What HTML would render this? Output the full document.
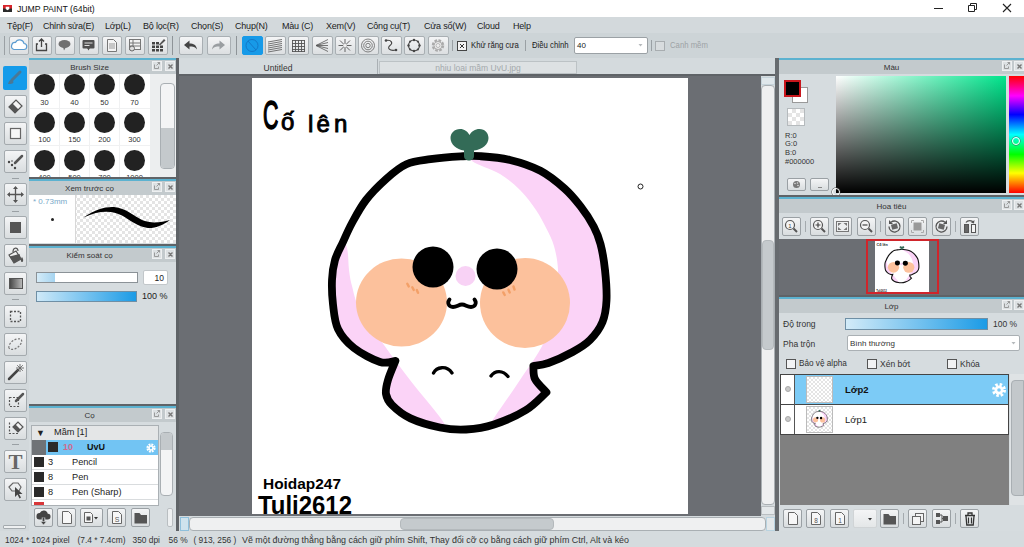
<!DOCTYPE html>
<html><head><meta charset="utf-8"><title>JUMP PAINT</title>
<style>
*{box-sizing:border-box;margin:0;padding:0}
html,body{width:1024px;height:547px;overflow:hidden;background:#d5dbde;font-family:"Liberation Sans",sans-serif;font-size:9px;color:#222}
.a{position:absolute}
.t{position:absolute;white-space:nowrap;line-height:1}
#title{left:0;top:0;width:1024px;height:17px;background:#fff}
#menu{left:0;top:17px;width:1024px;height:16px;background:#d3d9dc}
#menu .t{top:4.500px;font-size:9px;letter-spacing:-0.2px;color:#1c1c1c}
#tool{left:0;top:33px;width:1024px;height:25px;background:#cdd4d7}
.b{position:absolute;width:20px;height:19px;top:36px;background:linear-gradient(#f4f5f6,#dcdfe1);border:1px solid #a9afb3;border-radius:2px}
.b.sel{background:#179ae8;border-color:#179ae8}
.sep{position:absolute;width:1px;background:#8e9498}
.ph{position:absolute;height:14px;background:#c3cacd;text-align:center;font-size:8px;line-height:16px;color:#333}
.teal{position:absolute;height:2px;background:#5cb2d0}
.dk{position:absolute;height:2px;background:#5f6367}
.pb{position:absolute;width:10px;height:10px;border:1px solid #eef0f1;background:#dde1e3;top:1px}
.lb{position:absolute;width:23px;height:23px;left:4px;background:linear-gradient(#f4f5f6,#d9dddf);border:1px solid #a4aaae;border-radius:2px}
.sb{position:absolute;width:19px;height:19px;background:linear-gradient(#f4f5f6,#d9dddf);border:1px solid #9aa0a4;border-radius:2px}
.cb{position:absolute;width:10px;height:10px;border:1px solid #444;background:#f4f4f4}
.nx{transform:scaleX(.86);transform-origin:0 0}
.st{top:536px;font-size:8.400px;color:#333}
.chk{background-color:#fff;background-image:linear-gradient(45deg,#e4e4e4 25%,transparent 25%,transparent 75%,#e4e4e4 75%),linear-gradient(45deg,#e4e4e4 25%,transparent 25%,transparent 75%,#e4e4e4 75%);background-size:6px 6px;background-position:0 0,3px 3px}
</style></head><body>
<!-- TITLE -->
<div id="title" class="a">
<svg class="a" style="left:3px;top:5px" width="9" height="7" viewBox="0 0 10 8" preserveAspectRatio="none"><rect width="10" height="8" fill="#2a2a2a"/><rect width="10" height="4" fill="#d8232a"/><path d="M3 2h4v2.500l-2 1.500l-2-1.500z" fill="#fff"/></svg>
<span class="t" style="left:17px;top:4.500px;font-size:8.700px;color:#111">JUMP PAINT (64bit)</span>
<svg class="a" style="left:930px;top:0" width="94" height="17"><path d="M4 8.5h9" stroke="#222" stroke-width="1"/><path d="M38.5 5.5h6v6h-6z M40.500 5.500v-2h6v6h-2" fill="none" stroke="#222" stroke-width="1"/><path d="M73 4l8 8M81 4l-8 8" stroke="#222" stroke-width="1.1"/></svg>
</div>
<!-- MENU -->
<div id="menu" class="a">
<span class="t" style="left:7px">Tệp(F)</span>
<span class="t" style="left:43px">Chỉnh sửa(E)</span>
<span class="t" style="left:105px">Lớp(L)</span>
<span class="t" style="left:143px">Bộ lọc(R)</span>
<span class="t" style="left:191px">Chọn(S)</span>
<span class="t" style="left:235px">Chụp(N)</span>
<span class="t" style="left:282px">Màu (C)</span>
<span class="t" style="left:326px">Xem(V)</span>
<span class="t" style="left:367px">Công cụ(T)</span>
<span class="t" style="left:424px">Cửa sổ(W)</span>
<span class="t" style="left:477px">Cloud</span>
<span class="t" style="left:513px">Help</span>
</div>
<!-- TOOLBAR -->
<div id="tool" class="a"></div>
<!--TOOLBAR-BTNS-->
<div class="b" style="left:9px"><svg class="a" style="left:-1px;top:-1px" width="20" height="19"><path d="M5 13.500h9.500a3 3 0 0 0 .5-6a4.500 4.500 0 0 0-8.500-1a3.600 3.600 0 0 0-1.500 7z" fill="#fff" stroke="#5a9bd0" stroke-width="1.200"/></svg></div>
<div class="b" style="left:32px"><svg class="a" style="left:-1px;top:-1px" width="20" height="19"><path d="M6 8h-1.500v6.500h10v-6.500h-1.500M9.500 11v-8M7 5.500l2.500-2.500l2.500 2.500" fill="none" stroke="#444" stroke-width="1.300"/></svg></div>
<div class="b" style="left:55px"><svg class="a" style="left:-1px;top:-1px" width="20" height="19"><ellipse cx="9.500" cy="8" rx="6" ry="4" fill="#707070"/><path d="M8 11l1 3.500l2-3.500z" fill="#707070"/></svg></div>
<div class="b" style="left:79px"><svg class="a" style="left:-1px;top:-1px" width="20" height="19"><rect x="3.500" y="4" width="12" height="8.500" rx="1" fill="#505050"/><path d="M8 12l1.500 2.500l1.500-2.500z" fill="#505050"/><path d="M5.500 7h8M5.500 9.500h5" stroke="#ddd" stroke-width="1"/></svg></div>
<div class="b" style="left:102px"><svg class="a" style="left:-1px;top:-1px" width="20" height="19"><path d="M5.500 3.500h6l3 3v9h-9z" fill="#f4f4f4" stroke="#777" stroke-width="1"/><path d="M7 8h6M7 10h6M7 12h6" stroke="#999" stroke-width="1"/></svg></div>
<div class="b" style="left:125px"><svg class="a" style="left:-1px;top:-1px" width="20" height="19"><rect x="4.500" y="3.500" width="11" height="10" fill="#f2f2f2" stroke="#777"/><path d="M4.500 7h11M4.500 10h11M8 3.500v10" stroke="#777"/><circle cx="7" cy="12.500" r="2.500" fill="#ddd" stroke="#666"/></svg></div>
<div class="b" style="left:148px"><svg class="a" style="left:-1px;top:-1px" width="20" height="19"><path d="M4 6h3v2.500h-3zM8 6h3v2.500h-3zM4 9.500h3v2.500h-3zM8 9.500h3v2.500h-3zM12 9.500h3v2.500h-3zM4 13h3v2.500h-3zM8 13h3v2.500h-3zM12 13h3v2.500h-3z" fill="#444"/><path d="M11 8.500l5-5.500l1.500 1.500l-5.500 5z" fill="#555"/></svg></div>
<div class="sep" style="left:4px;top:36px;height:19px;background:#9aa0a4"></div>
<div class="sep" style="left:172px;top:36px;height:19px"></div>
<div class="b" style="left:179px;width:24px"><svg class="a" style="left:-1px;top:-1px" width="23" height="19"><path d="M5 9l5.500-4.500v3c4 0 7 1.500 7.500 6c-1.500-2.500-4-3-7.500-3v3z" fill="#444"/></svg></div>
<div class="b" style="left:207px;width:24px"><svg class="a" style="left:-1px;top:-1px" width="23" height="19"><path d="M18 9l-5.500-4.500v3c-4 0-7 1.500-7.500 6c1.500-2.500 4-3 7.500-3v3z" fill="#9a9ea1"/></svg></div>
<div class="sep" style="left:236px;top:36px;height:19px"></div>
<div class="b sel" style="left:242px;width:21px"><svg class="a" style="left:-1px;top:-1px" width="21" height="19"><circle cx="10" cy="9.500" r="6" fill="none" stroke="#1478c8" stroke-width="1"/><path d="M6 5l8 9" stroke="#1478c8" stroke-width="1"/></svg></div>
<div class="b" style="left:265px;width:21px"><svg class="a" style="left:-1px;top:-1px" width="21" height="19"><path d="M3 6l14-2.500M3 8l14-2.500M3 10l14-2.500M3 12l14-2.500M3 14l14-2.500M3 16l14-2.500" stroke="#555" stroke-width=".8"/></svg></div>
<div class="b" style="left:288px;width:21px"><svg class="a" style="left:-1px;top:-1px" width="21" height="19"><path d="M4.500 4v12M7.500 4v12M10.500 4v12M13.500 4v12M16.500 4v12M4 4.500h13M4 7.500h13M4 10.500h13M4 13.500h13M4 15.500h13" stroke="#555" stroke-width=".9"/></svg></div>
<div class="b" style="left:312px;width:21px"><svg class="a" style="left:-1px;top:-1px" width="21" height="19"><path d="M4 9.500l12-6M4 9.500l12-3M4 9.500h12M4 9.500l12 3M4 9.500l12 6" stroke="#555" stroke-width=".8"/></svg></div>
<div class="b" style="left:335px;width:21px"><svg class="a" style="left:-1px;top:-1px" width="21" height="19"><path d="M10 3v13M3.500 9.500h13M5 4.500l10 10M15 4.500l-10 10" stroke="#555" stroke-width=".9"/><circle cx="10" cy="9.500" r="1.800" fill="#eee"/></svg></div>
<div class="b" style="left:358px;width:21px"><svg class="a" style="left:-1px;top:-1px" width="21" height="19"><circle cx="10" cy="9.500" r="6.500" fill="none" stroke="#666" stroke-width=".8"/><circle cx="10" cy="9.500" r="4.300" fill="none" stroke="#666" stroke-width=".8"/><circle cx="10" cy="9.500" r="2.200" fill="none" stroke="#666" stroke-width=".8"/></svg></div>
<div class="b" style="left:381px;width:21px"><svg class="a" style="left:-1px;top:-1px" width="21" height="19"><path d="M5 4.500c6-1 7 3 4 5s-1 6 6 4.500" fill="none" stroke="#444" stroke-width="1.100"/><circle cx="5" cy="4.500" r="1.300" fill="#444"/><circle cx="15" cy="14" r="1.300" fill="#444"/></svg></div>
<div class="b" style="left:404px;width:21px"><svg class="a" style="left:-1px;top:-1px" width="21" height="19"><circle cx="10" cy="9.500" r="5.500" fill="none" stroke="#444" stroke-width="1.100"/><circle cx="10" cy="4" r="1.200" fill="#444"/><circle cx="10" cy="15" r="1.200" fill="#444"/><circle cx="4.500" cy="9.500" r="1.200" fill="#444"/><circle cx="15.500" cy="9.500" r="1.200" fill="#444"/><circle cx="6.100" cy="5.600" r="1" fill="#444"/><circle cx="13.900" cy="5.600" r="1" fill="#444"/><circle cx="6.100" cy="13.400" r="1" fill="#444"/><circle cx="13.900" cy="13.400" r="1" fill="#444"/></svg></div>
<div class="b" style="left:428px;width:21px"><svg class="a" style="left:-1px;top:-1px" width="21" height="19"><circle cx="10" cy="9.500" r="5" fill="none" stroke="#aaa" stroke-width="2.500" stroke-dasharray="2.600 1.300"/><circle cx="10" cy="9.500" r="4" fill="#eee" stroke="#aaa" stroke-width="1"/><circle cx="10" cy="9.500" r="2" fill="none" stroke="#aaa" stroke-width=".8"/></svg></div>
<div class="sep" style="left:452px;top:40px;height:11px;background:#9aa0a4"></div>
<div class="cb" style="left:457px;top:41px"><svg class="a" style="left:1px;top:1px" width="6" height="6"><path d="M1 1l4 4M5 1l-4 4" stroke="#333" stroke-width="1"/></svg></div>
<span class="t nx" style="left:471px;top:41px;font-size:9px">Khử răng cưa</span>
<div class="sep" style="left:525px;top:40px;height:11px;background:#9aa0a4"></div>
<span class="t nx" style="left:532px;top:41px;font-size:9px">Điều chỉnh</span>
<div class="a" style="left:574px;top:37px;width:74px;height:17px;background:#fff;border:1px solid #9ba1a5;border-radius:2px"><span class="t" style="left:2px;top:4px;font-size:8px">40</span><svg class="a" style="left:63px;top:6px" width="6" height="4"><path d="M.5 0h4l-2 2.500z" fill="#b5b9bc"/></svg></div>
<div class="sep" style="left:651px;top:40px;height:11px;background:#9aa0a4"></div>
<div class="cb" style="left:655px;top:41px;border-color:#a8adb0;background:#d8dcde"></div>
<span class="t nx" style="left:670px;top:41px;font-size:9px;color:#9da3a6">Canh mềm</span>
<!--LEFT-->
<div class="a" style="left:0;top:58px;width:29px;height:473px;background:#d2d8db"></div>
<div class="a" style="left:3px;top:66px;width:24px;height:24px;background:#149bea;border-radius:2px"><svg class="a" style="left:0;top:0" width="23" height="23"><path d="M17 6l-8 8" stroke="#4a7896" stroke-width="3" stroke-linecap="round"/><path d="M5 18c1-4 3-5 5-3c1.500 2-1 3.500-5 3z" fill="#4a7896"/></svg></div>
<div class="lb" style="top:95px"><svg class="a" style="left:-1px;top:-1px" width="23" height="23"><path d="M5 12l7-7l6 6l-7 7z" fill="#f4f4f4" stroke="#555" stroke-width="1.200"/><path d="M5 12l3.500-3.500l6 6l-3.500 3.500z" fill="#555"/></svg></div>
<div class="lb" style="top:122px"><svg class="a" style="left:-1px;top:-1px" width="23" height="23"><rect x="6.500" y="6.500" width="10" height="10" fill="#f7f7f7" stroke="#666" stroke-width="1.200"/></svg></div>
<div class="lb" style="top:150px"><svg class="a" style="left:-1px;top:-1px" width="23" height="23"><path d="M18 6l-7 7" stroke="#555" stroke-width="2.500" stroke-linecap="round"/><circle cx="5" cy="12" r="1.200" fill="#444"/><circle cx="8" cy="15" r="1.200" fill="#444"/><circle cx="11" cy="18" r="1.200" fill="#444"/><circle cx="8" cy="11" r=".8" fill="#444"/></svg></div>
<div class="lb" style="top:183px"><svg class="a" style="left:-1px;top:-1px" width="23" height="23"><path d="M11.500 4v15M4 11.500h15" stroke="#555" stroke-width="1.300"/><path d="M11.500 3l-2.500 3h5zM11.500 20l-2.500-3h5zM3 11.500l3-2.500v5zM20 11.500l-3-2.500v5z" fill="#555"/></svg></div>
<div class="lb" style="top:216px"><svg class="a" style="left:-1px;top:-1px" width="23" height="23"><rect x="6" y="6" width="11" height="11" fill="#555"/></svg></div>
<div class="lb" style="top:244px"><svg class="a" style="left:-1px;top:-1px" width="23" height="23"><path d="M5 11l7-4l5 8l-7 4z" fill="#f0f0f0" stroke="#555" stroke-width="1.200"/><path d="M5.500 12.500l10-2.500l1.500 5l-7 4z" fill="#555"/><path d="M9 8c0-5 5-5 5-1" fill="none" stroke="#555" stroke-width="1.200"/><path d="M18 13c2 3 1 5 0 5s-2-2 0-5z" fill="#555"/></svg></div>
<div class="lb" style="top:272px"><svg class="a" style="left:-1px;top:-1px" width="23" height="23"><defs><linearGradient id="gg" x1="0" x2="1"><stop offset="0" stop-color="#444"/><stop offset="1" stop-color="#bbb"/></linearGradient></defs><rect x="5.500" y="6.500" width="13" height="10" fill="url(#gg)" stroke="#555"/></svg></div>
<div class="lb" style="top:305px"><svg class="a" style="left:-1px;top:-1px" width="23" height="23"><rect x="6.500" y="6.500" width="10" height="10" fill="none" stroke="#555" stroke-width="1.300" stroke-dasharray="2 1.500"/></svg></div>
<div class="lb" style="top:333px"><svg class="a" style="left:-1px;top:-1px" width="23" height="23"><path d="M5 15c-1-3 3-8 8-9s6 2 3 6s-9 6-11 3z" fill="none" stroke="#777" stroke-width="1.200" stroke-dasharray="2 1.500"/></svg></div>
<div class="lb" style="top:361px"><svg class="a" style="left:-1px;top:-1px" width="23" height="23"><path d="M5 18l9-9" stroke="#444" stroke-width="2.500" stroke-linecap="round"/><path d="M16 3v8M12 7h8M13.200 4.200l5.600 5.600M18.800 4.200l-5.600 5.600" stroke="#666" stroke-width=".9"/></svg></div>
<div class="lb" style="top:389px"><svg class="a" style="left:-1px;top:-1px" width="23" height="23"><rect x="5.500" y="8.500" width="9" height="9" fill="none" stroke="#555" stroke-width="1.200" stroke-dasharray="2 1.500"/><path d="M19 5l-7 7" stroke="#555" stroke-width="2.500" stroke-linecap="round"/></svg></div>
<div class="lb" style="top:417px"><svg class="a" style="left:-1px;top:-1px" width="23" height="23"><path d="M5.500 5.500v11h9" fill="none" stroke="#555" stroke-width="1.200" stroke-dasharray="2 1.500"/><path d="M9 10l5-5l5 5l-5 5z" fill="#f4f4f4" stroke="#555" stroke-width="1.200"/><path d="M9 10l2.500-2.500l5 5l-2.500 2.500z" fill="#555"/></svg></div>
<div class="lb" style="top:450px"><svg class="a" style="left:-1px;top:-1px" width="23" height="23"><text x="11.500" y="19" font-family="Liberation Serif,serif" font-size="21" font-weight="bold" text-anchor="middle" fill="#666">T</text></svg></div>
<div class="lb" style="top:478px"><svg class="a" style="left:-1px;top:-1px" width="23" height="23"><path d="M5 9l4-4h5l3 4l-2 4h-7z" fill="none" stroke="#666" stroke-width="1.200"/><path d="M11 9v10l2.500-2.500l2 4l1.500-1l-2-3.500h3.500z" fill="#444"/></svg></div>
<div class="a" style="left:12px;top:178px;width:7px;height:1px;background:#9aa0a4"></div>
<div class="a" style="left:12px;top:211px;width:7px;height:1px;background:#9aa0a4"></div>
<div class="a" style="left:12px;top:299px;width:7px;height:1px;background:#9aa0a4"></div>
<div class="a" style="left:12px;top:444px;width:7px;height:1px;background:#9aa0a4"></div>
<div class="a" style="left:3px;top:525px;width:23px;height:4px;background:#eef0f1;border:1px solid #a4aaae;border-radius:1px"></div>
<div class="teal" style="left:29px;top:58px;width:147px"></div><div class="ph" style="left:29px;top:60px;width:147px"><span style="position:relative;left:-13px">Brush Size</span><div class="pb" style="left:123px"><svg class="a" style="left:0;top:0" width="7" height="7"><path d="M1.500 2.500v4h4v-2M3.500 3.500l3-3M4.500 .5h2v2" fill="none" stroke="#888" stroke-width=".8"/></svg></div><div class="pb" style="left:136px"><svg class="a" style="left:.5px;top:.5px" width="7" height="7"><path d="M1.500 1.500l4 4M5.500 1.500l-4 4" stroke="#777" stroke-width="1.400"/></svg></div></div>
<div class="a" style="left:29px;top:74px;width:147px;height:103px;background:#eceeef;overflow:hidden"><div class="a" style="left:1px;top:0;width:120px;height:103px;background:#fff"></div>
<div class="a" style="left:5.0px;top:0.00px;width:21px;height:21px;border-radius:50%;background:#222"></div>
<span class="t" style="left:0.5px;top:24.50px;width:30px;text-align:center;font-size:7.500px;color:#333">30</span>
<div class="a" style="left:35.0px;top:0.00px;width:21px;height:21px;border-radius:50%;background:#222"></div>
<span class="t" style="left:30.5px;top:24.50px;width:30px;text-align:center;font-size:7.500px;color:#333">40</span>
<div class="a" style="left:65.0px;top:0.00px;width:21px;height:21px;border-radius:50%;background:#222"></div>
<span class="t" style="left:60.5px;top:24.50px;width:30px;text-align:center;font-size:7.500px;color:#333">50</span>
<div class="a" style="left:95.0px;top:0.00px;width:21px;height:21px;border-radius:50%;background:#222"></div>
<span class="t" style="left:90.5px;top:24.50px;width:30px;text-align:center;font-size:7.500px;color:#333">70</span>
<div class="a" style="left:5.0px;top:37.75px;width:21px;height:21px;border-radius:50%;background:#222"></div>
<span class="t" style="left:0.5px;top:62.25px;width:30px;text-align:center;font-size:7.500px;color:#333">100</span>
<div class="a" style="left:35.0px;top:37.75px;width:21px;height:21px;border-radius:50%;background:#222"></div>
<span class="t" style="left:30.5px;top:62.25px;width:30px;text-align:center;font-size:7.500px;color:#333">150</span>
<div class="a" style="left:65.0px;top:37.75px;width:21px;height:21px;border-radius:50%;background:#222"></div>
<span class="t" style="left:60.5px;top:62.25px;width:30px;text-align:center;font-size:7.500px;color:#333">200</span>
<div class="a" style="left:95.0px;top:37.75px;width:21px;height:21px;border-radius:50%;background:#222"></div>
<span class="t" style="left:90.5px;top:62.25px;width:30px;text-align:center;font-size:7.500px;color:#333">300</span>
<div class="a" style="left:5.0px;top:75.50px;width:21px;height:21px;border-radius:50%;background:#222"></div>
<span class="t" style="left:0.5px;top:100.00px;width:30px;text-align:center;font-size:7.500px;color:#333">400</span>
<div class="a" style="left:35.0px;top:75.50px;width:21px;height:21px;border-radius:50%;background:#222"></div>
<span class="t" style="left:30.5px;top:100.00px;width:30px;text-align:center;font-size:7.500px;color:#333">500</span>
<div class="a" style="left:65.0px;top:75.50px;width:21px;height:21px;border-radius:50%;background:#222"></div>
<span class="t" style="left:60.5px;top:100.00px;width:30px;text-align:center;font-size:7.500px;color:#333">700</span>
<div class="a" style="left:95.0px;top:75.50px;width:21px;height:21px;border-radius:50%;background:#222"></div>
<span class="t" style="left:90.5px;top:100.00px;width:30px;text-align:center;font-size:7.500px;color:#333">1000</span>
<div class="a" style="left:30px;top:0;width:1px;height:103px;background:#f0f1f2"></div>
<div class="a" style="left:60px;top:0;width:1px;height:103px;background:#f0f1f2"></div>
<div class="a" style="left:90px;top:0;width:1px;height:103px;background:#f0f1f2"></div>
<div class="a" style="left:1px;top:34px;width:120px;height:1px;background:#f0f1f2"></div>
<div class="a" style="left:1px;top:71px;width:120px;height:1px;background:#f0f1f2"></div>
<div class="a" style="left:131px;top:9px;width:15px;height:86px;background:#f3f4f5;border:1px solid #a9afb3;border-radius:4px"></div><div class="a" style="left:132px;top:54px;width:13px;height:40px;background:#c4c9cc;border-radius:0 0 3px 3px"></div>
</div>
<div class="dk" style="left:29px;top:177px;width:147px"></div><div class="teal" style="left:29px;top:179px;width:147px"></div><div class="ph" style="left:29px;top:181px;width:147px"><span style="position:relative;left:-13px">Xem trước cọ</span><div class="pb" style="left:123px"><svg class="a" style="left:0;top:0" width="7" height="7"><path d="M1.500 2.500v4h4v-2M3.500 3.500l3-3M4.500 .5h2v2" fill="none" stroke="#888" stroke-width=".8"/></svg></div><div class="pb" style="left:136px"><svg class="a" style="left:.5px;top:.5px" width="7" height="7"><path d="M1.500 1.500l4 4M5.500 1.500l-4 4" stroke="#777" stroke-width="1.400"/></svg></div></div>
<div class="a chk" style="left:29px;top:195px;width:147px;height:48px"></div><div class="a" style="left:29px;top:195px;width:47px;height:48px;background:#fff;border-right:1px solid #d8d8d8"></div>
<span class="t" style="left:33px;top:198px;font-size:8px;color:#7aa9c9">* 0.73mm</span><div class="a" style="left:51px;top:218px;width:3px;height:3px;border-radius:50%;background:#222"></div>
<svg class="a" style="left:76px;top:195px" width="100" height="48"><path d="M7.500 22.500C20 14 30 11.500 38 12C50 13 58 21 66 25C74 28.500 84 28 94 25C86 31 78 33.500 72 33C62 32 54 25 46 20.500C36 15.500 24 15 7.500 22.500z" fill="#000"/></svg>
<div class="dk" style="left:29px;top:244px;width:147px"></div><div class="teal" style="left:29px;top:246px;width:147px"></div><div class="ph" style="left:29px;top:248px;width:147px"><span style="position:relative;left:-13px">Kiểm soát cọ</span><div class="pb" style="left:123px"><svg class="a" style="left:0;top:0" width="7" height="7"><path d="M1.500 2.500v4h4v-2M3.500 3.500l3-3M4.500 .5h2v2" fill="none" stroke="#888" stroke-width=".8"/></svg></div><div class="pb" style="left:136px"><svg class="a" style="left:.5px;top:.5px" width="7" height="7"><path d="M1.500 1.500l4 4M5.500 1.500l-4 4" stroke="#777" stroke-width="1.400"/></svg></div></div>
<div class="a" style="left:29px;top:262px;width:147px;height:142px;background:#d6dcdf"></div>
<div class="a" style="left:36px;top:272px;width:102px;height:11px;background:#fff;border:1px solid #8b9297"><div class="a" style="left:0;top:0;width:18px;height:9px;background:linear-gradient(90deg,#d4ebf8,#a5d4f0)"></div></div>
<div class="a" style="left:143px;top:270px;width:25px;height:15px;background:#fff;border:1px solid #c2c7ca;border-radius:2px"><span class="t" style="right:3px;top:3px;font-size:8.500px">10</span></div>
<div class="a" style="left:36px;top:291px;width:101px;height:11px;background:linear-gradient(90deg,#cfe9f8,#1b9be6);border:1px solid #6f8fa5"></div>
<span class="t" style="left:142px;top:292px;font-size:9px">100 %</span>
<div class="dk" style="left:29px;top:404px;width:147px"></div><div class="teal" style="left:29px;top:406px;width:147px"></div><div class="ph" style="left:29px;top:408px;width:147px"><span style="position:relative;left:-13px">Cọ</span><div class="pb" style="left:123px"><svg class="a" style="left:0;top:0" width="7" height="7"><path d="M1.500 2.500v4h4v-2M3.500 3.500l3-3M4.500 .5h2v2" fill="none" stroke="#888" stroke-width=".8"/></svg></div><div class="pb" style="left:136px"><svg class="a" style="left:.5px;top:.5px" width="7" height="7"><path d="M1.500 1.500l4 4M5.500 1.500l-4 4" stroke="#777" stroke-width="1.400"/></svg></div></div>
<div class="a" style="left:29px;top:422px;width:147px;height:109px;background:#d6dcdf"></div>
<div class="a" style="left:31px;top:425px;width:128px;height:81px;background:#fff;border:1px solid #aab0b4;overflow:hidden">
<div class="a" style="left:0;top:0;width:128px;height:14px;background:#e4e6e7"><span class="t" style="left:4px;top:3px;font-size:9px;color:#222">▼</span><span class="t" style="left:22px;top:2px;font-size:9.200px">Mầm [1]</span></div>
<div class="a" style="left:0;top:14px;width:128px;height:15px;background:#72c4f3"><div class="a" style="left:0;top:0;width:14px;height:15px;background:#6f7377"></div><div class="a" style="left:16px;top:2px;width:10px;height:10px;background:#2a2a2a"></div><span class="t" style="left:31px;top:3px;font-size:9px;font-weight:bold;color:#d06a8c">10</span><span class="t" style="left:55px;top:3px;font-size:9px;font-weight:bold;color:#111">UvU</span><svg class="a" style="left:114px;top:3px" width="10" height="10"><circle cx="5" cy="5" r="3.200" fill="none" stroke="#fff" stroke-width="2.800" stroke-dasharray="1.700 .8"/><circle cx="5" cy="5" r="2.500" fill="#fff"/><circle cx="5" cy="5" r="1.200" fill="#72c4f3"/></svg></div>
<div class="a" style="left:0;top:29px;width:128px;height:15px;border-bottom:1px solid #d9dcde"><div class="a" style="left:2px;top:2px;width:10px;height:10px;background:#2a2a2a"></div><span class="t" style="left:16px;top:3px;font-size:9.200px">3</span><span class="t" style="left:40px;top:3px;font-size:9.200px">Pencil</span></div>
<div class="a" style="left:0;top:44px;width:128px;height:15px;border-bottom:1px solid #d9dcde"><div class="a" style="left:2px;top:2px;width:10px;height:10px;background:#2a2a2a"></div><span class="t" style="left:16px;top:3px;font-size:9.200px">8</span><span class="t" style="left:40px;top:3px;font-size:9.200px">Pen</span></div>
<div class="a" style="left:0;top:59px;width:128px;height:15px;border-bottom:1px solid #d9dcde"><div class="a" style="left:2px;top:2px;width:10px;height:10px;background:#2a2a2a"></div><span class="t" style="left:16px;top:3px;font-size:9.200px">8</span><span class="t" style="left:40px;top:3px;font-size:9.200px">Pen (Sharp)</span></div>
<div class="a" style="left:2px;top:76px;width:10px;height:10px;background:#d8383a"></div><span class="t" style="left:16px;top:78px;font-size:9.500px;color:#d06a8c">21</span><span class="t" style="left:40px;top:78px;font-size:9.200px">G-Pen</span>
</div>
<div class="a" style="left:160px;top:432px;width:13px;height:64px;background:#f3f4f5;border:1px solid #a9afb3;border-radius:4px"></div><div class="a" style="left:161px;top:433px;width:11px;height:17px;background:#c4c9cc;border-radius:3px 3px 0 0"></div>
<div class="sb" style="left:34px;top:508px;width:19px"><svg class="a" style="left:-1px;top:-1px" width="19" height="19"><path d="M5.500 11.500a3.200 3.200 0 0 1 .3-6.400a4.200 4.200 0 0 1 8 .6a2.900 2.900 0 0 1-.3 5.800z" fill="#444"/><path d="M9.500 9.500v5" stroke="#d9dddf" stroke-width="3.500"/><path d="M9.500 9.500v5" stroke="#444" stroke-width="1.800"/><path d="M6.500 13.500h6l-3 3.500z" fill="#444" stroke="#d9dddf" stroke-width=".6"/></svg></div>
<div class="sb" style="left:57px;top:508px;width:19px"><svg class="a" style="left:-1px;top:-1px" width="19" height="19"><path d="M5.500 3.500h6l3 3v9h-9z" fill="#f7f7f7" stroke="#666"/></svg></div>
<div class="sb" style="left:80px;top:508px;width:23px"><svg class="a" style="left:-1px;top:-1px" width="23" height="19"><path d="M4.500 4.500h6l2 2v8h-8z" fill="#f7f7f7" stroke="#666"/><rect x="6.500" y="8.500" width="4" height="4" fill="#555"/><path d="M14 9h4l-2 2.500z" fill="#333"/></svg></div>
<div class="sb" style="left:107px;top:508px;width:19px"><svg class="a" style="left:-1px;top:-1px" width="19" height="19"><path d="M5.500 3.500h6l3 3v9h-9z" fill="#f7f7f7" stroke="#666"/><text x="10" y="14" font-size="7" text-anchor="middle" fill="#555" font-family="Liberation Sans,sans-serif">S</text></svg></div>
<div class="sb" style="left:131px;top:508px;width:19px"><svg class="a" style="left:-1px;top:-1px" width="19" height="19"><path d="M3.500 5h5l1.500 2h6v8.500h-12.500z" fill="#555"/></svg></div>
<div class="a" style="left:167px;top:508px;width:6px;height:19px;background:#eef0f1;border:1px solid #b9bec1;border-radius:2px"></div>
<!--CENTER-->
<div class="a" style="left:176px;top:58px;width:3px;height:473px;background:#5f6367"></div>
<div class="a" style="left:775px;top:58px;width:4px;height:473px;background:#676b6f"></div>
<div class="a" style="left:179px;top:58px;width:596px;height:18px;background:#d4dadd"></div>
<div class="a" style="left:179px;top:59px;width:199px;height:16px;background:#d5dbde;border-right:1px solid #aab0b4"><span class="t" style="left:0;width:198px;text-align:center;top:5px;font-size:8.500px;color:#333">Untitled</span></div>
<div class="a" style="left:379px;top:61px;width:198px;height:13px;background:#dde1e3;border:1px solid #bcc2c5"><span class="t" style="left:0;width:196px;text-align:center;top:2px;font-size:8.500px;color:#a4a9ac">nhiu loai mầm UvU.jpg</span></div>
<div class="a" style="left:179px;top:74px;width:596px;height:2px;background:#5f6367"></div>
<div class="a" style="left:179px;top:76px;width:582px;height:440px;background:#6b6e73"></div>
<div class="a" style="left:252px;top:78px;width:436px;height:436px;background:#fff"></div>
<div class="a" style="left:761px;top:76px;width:14px;height:455px;background:#d5dbde"></div>
<div class="a" style="left:761px;top:77px;width:14px;height:8px;background:#dfe7eb;border:1px solid #c5d3da"></div>
<div class="a" style="left:761px;top:85px;width:14px;height:420px;background:#eff0f1;border:1px solid #a9afb3;border-radius:4px"></div>
<div class="a" style="left:762px;top:240px;width:12px;height:110px;background:#c5cacd;border-radius:4px;border:1px solid #b4b9bc"></div>
<div class="a" style="left:761px;top:506px;width:14px;height:9px;background:#e4e8ea;border:1px solid #b9bec1"></div>
<div class="a" style="left:179px;top:516px;width:596px;height:15px;background:#d5dbde"></div>
<div class="a" style="left:180px;top:517px;width:9px;height:14px;background:#cfe3ee;border:1px solid #8fc0dc"></div>
<div class="a" style="left:189px;top:517px;width:577px;height:14px;background:#eff0f1;border:1px solid #a9afb3;border-radius:4px"></div>
<div class="a" style="left:400px;top:518px;width:154px;height:12px;background:#c5cacd;border-radius:4px;border:1px solid #b4b9bc"></div>
<div class="a" style="left:766px;top:517px;width:9px;height:14px;background:#e4e8ea;border:1px solid #b9d3e0"></div>
<svg class="a" style="left:252px;top:78px" width="436" height="436" viewBox="252 78 436 436">
<defs><clipPath id="bc"><path d="M395.4 361C392.8 361.2 386.9 364.2 380.0 362.0C373.1 359.8 361.0 353.5 354.0 348.0C347.0 342.5 341.5 336.3 338.0 329.0C334.5 321.7 334.0 312.6 333.0 304.4C332.0 296.2 331.7 287.4 332.0 280.0C332.3 272.6 333.2 266.3 335.0 260.0C336.8 253.7 340.2 248.2 343.0 242.0C345.8 235.8 348.2 230.0 352.0 223.0C355.8 216.0 360.3 207.4 366.0 200.0C371.7 192.6 379.6 184.8 386.3 178.8C393.0 172.8 399.0 167.5 406.4 164.2C413.8 160.9 421.4 160.5 430.5 159.2C439.6 157.9 452.4 156.9 460.7 156.4C468.9 155.9 471.8 155.6 480.0 156.2C488.2 156.8 499.9 157.6 510.0 160.0C520.1 162.4 531.3 166.1 540.4 170.8C549.5 175.6 557.8 182.6 564.5 188.5C571.2 194.4 575.7 200.1 580.6 206.4C585.5 212.7 590.4 220.2 593.7 226.5C597.0 232.8 598.6 236.8 600.5 244.0C602.4 251.2 604.0 260.6 605.0 270.0C606.0 279.4 606.9 291.7 606.5 300.4C606.1 309.1 605.2 315.4 602.5 322.0C599.8 328.6 595.0 335.0 590.0 340.0C585.0 345.0 579.5 348.2 572.6 352.0C565.7 355.8 554.9 360.7 548.4 363.0C541.9 365.3 535.9 365.5 533.4 366.0C533.7 368.2 532.8 374.6 535.0 379.0C537.2 383.4 544.5 390.1 546.4 392.3C543.0 395.2 534.7 404.6 526.0 410.0C517.3 415.4 504.0 421.2 494.0 424.5C484.0 427.8 475.0 429.0 466.0 429.5C457.0 430.0 449.2 429.4 440.0 427.5C430.8 425.6 418.5 422.1 410.5 418.4C402.5 414.6 396.1 409.1 392.0 405.0C387.9 400.9 386.7 398.2 386.0 394.0C385.3 389.8 386.4 385.5 388.0 380.0C389.6 374.5 394.2 364.2 395.4 361.0Z"/></clipPath></defs>
<path d="M395.4 361C392.8 361.2 386.9 364.2 380.0 362.0C373.1 359.8 361.0 353.5 354.0 348.0C347.0 342.5 341.5 336.3 338.0 329.0C334.5 321.7 334.0 312.6 333.0 304.4C332.0 296.2 331.7 287.4 332.0 280.0C332.3 272.6 333.2 266.3 335.0 260.0C336.8 253.7 340.2 248.2 343.0 242.0C345.8 235.8 348.2 230.0 352.0 223.0C355.8 216.0 360.3 207.4 366.0 200.0C371.7 192.6 379.6 184.8 386.3 178.8C393.0 172.8 399.0 167.5 406.4 164.2C413.8 160.9 421.4 160.5 430.5 159.2C439.6 157.9 452.4 156.9 460.7 156.4C468.9 155.9 471.8 155.6 480.0 156.2C488.2 156.8 499.9 157.6 510.0 160.0C520.1 162.4 531.3 166.1 540.4 170.8C549.5 175.6 557.8 182.6 564.5 188.5C571.2 194.4 575.7 200.1 580.6 206.4C585.5 212.7 590.4 220.2 593.7 226.5C597.0 232.8 598.6 236.8 600.5 244.0C602.4 251.2 604.0 260.6 605.0 270.0C606.0 279.4 606.9 291.7 606.5 300.4C606.1 309.1 605.2 315.4 602.5 322.0C599.8 328.6 595.0 335.0 590.0 340.0C585.0 345.0 579.5 348.2 572.6 352.0C565.7 355.8 554.9 360.7 548.4 363.0C541.9 365.3 535.9 365.5 533.4 366.0C533.7 368.2 532.8 374.6 535.0 379.0C537.2 383.4 544.5 390.1 546.4 392.3C543.0 395.2 534.7 404.6 526.0 410.0C517.3 415.4 504.0 421.2 494.0 424.5C484.0 427.8 475.0 429.0 466.0 429.5C457.0 430.0 449.2 429.4 440.0 427.5C430.8 425.6 418.5 422.1 410.5 418.4C402.5 414.6 396.1 409.1 392.0 405.0C387.9 400.9 386.7 398.2 386.0 394.0C385.3 389.8 386.4 385.5 388.0 380.0C389.6 374.5 394.2 364.2 395.4 361.0Z" fill="#fbd3f7"/>
<g clip-path="url(#bc)"><path d="M472 150C472.0 151.8 467.3 157.0 472.0 161.0C476.7 165.0 492.0 169.2 500.0 174.0C508.0 178.8 514.0 184.0 520.0 190.0C526.0 196.0 531.6 203.6 536.0 210.0C540.4 216.4 543.4 222.5 546.4 228.5C549.4 234.5 552.1 239.1 554.0 246.0C555.9 252.9 557.7 261.0 558.0 270.0C558.3 279.0 558.3 288.0 556.0 300.0C553.7 312.0 550.0 328.7 544.0 342.0C538.0 355.3 528.3 367.3 520.0 380.0C511.7 392.7 500.7 408.0 494.0 418.0C487.3 428.0 486.5 436.3 480.0 440.0C473.5 443.7 461.6 443.7 455.0 440.0C448.4 436.3 448.1 428.0 440.6 418.0C433.1 408.0 419.4 392.2 410.0 380.0C400.6 367.8 392.3 356.7 384.0 345.0C375.7 333.3 365.3 319.8 360.0 310.0C354.7 300.2 353.8 292.7 352.0 286.0C350.2 279.3 349.8 276.3 349.0 270.0C348.2 263.7 348.5 253.8 347.0 248.0C345.5 242.2 341.2 237.2 340.0 235.0L300 235L300 140Z" fill="#fff"/>
<ellipse cx="401.500" cy="302.500" rx="45.500" ry="44" fill="#fcc19c"/><ellipse cx="525" cy="303" rx="45" ry="45" fill="#fcc19c"/></g>
<path d="M395.4 361C392.8 361.2 386.9 364.2 380.0 362.0C373.1 359.8 361.0 353.5 354.0 348.0C347.0 342.5 341.5 336.3 338.0 329.0C334.5 321.7 334.0 312.6 333.0 304.4C332.0 296.2 331.7 287.4 332.0 280.0C332.3 272.6 333.2 266.3 335.0 260.0C336.8 253.7 340.2 248.2 343.0 242.0C345.8 235.8 348.2 230.0 352.0 223.0C355.8 216.0 360.3 207.4 366.0 200.0C371.7 192.6 379.6 184.8 386.3 178.8C393.0 172.8 399.0 167.5 406.4 164.2C413.8 160.9 421.4 160.5 430.5 159.2C439.6 157.9 452.4 156.9 460.7 156.4C468.9 155.9 471.8 155.6 480.0 156.2C488.2 156.8 499.9 157.6 510.0 160.0C520.1 162.4 531.3 166.1 540.4 170.8C549.5 175.6 557.8 182.6 564.5 188.5C571.2 194.4 575.7 200.1 580.6 206.4C585.5 212.7 590.4 220.2 593.7 226.5C597.0 232.8 598.6 236.8 600.5 244.0C602.4 251.2 604.0 260.6 605.0 270.0C606.0 279.4 606.9 291.7 606.5 300.4C606.1 309.1 605.2 315.4 602.5 322.0C599.8 328.6 595.0 335.0 590.0 340.0C585.0 345.0 579.5 348.2 572.6 352.0C565.7 355.8 554.9 360.7 548.4 363.0C541.9 365.3 535.9 365.5 533.4 366.0C533.7 368.2 532.8 374.6 535.0 379.0C537.2 383.4 544.5 390.1 546.4 392.3C543.0 395.2 534.7 404.6 526.0 410.0C517.3 415.4 504.0 421.2 494.0 424.5C484.0 427.8 475.0 429.0 466.0 429.5C457.0 430.0 449.2 429.4 440.0 427.5C430.8 425.6 418.5 422.1 410.5 418.4C402.5 414.6 396.1 409.1 392.0 405.0C387.9 400.9 386.7 398.2 386.0 394.0C385.3 389.8 386.4 385.5 388.0 380.0C389.6 374.5 394.2 364.2 395.4 361.0Z" fill="none" stroke="#000" stroke-width="7.800" stroke-linejoin="round"/>
<path d="M464 156v-5.500c-7.500-1-13.500-6-13.500-12.500c0-5 4-9 9.500-9c4.500 0 7.500 2.500 9.500 6c2-3.500 5.500-6 10-6c5.500 0 9 4 9 9c0 6.500-6 11.500-14.500 12.500v5.500c0 6-10 6-10 0z" fill="#336b57"/>
<circle cx="465.500" cy="276" r="10" fill="#f8d2f5"/>
<circle cx="433" cy="267" r="20.500" fill="#000"/><circle cx="497" cy="269" r="20.500" fill="#000"/>
<path d="M449.500 299.500c-2.500 3-1 7.500 3.500 7.500c4 0 5.500-2.500 9-2.500s5 2.500 9 2.500c4.500 0 6-4.500 3.500-7.500" fill="none" stroke="#000" stroke-width="3.800" stroke-linecap="round"/>
<path d="M433.500 373c3-6 13-8 18.500 0M491 376c4-6 12-6 17 .5" fill="none" stroke="#000" stroke-width="3.300" stroke-linecap="round"/>
<path d="M407.300 283.800l1.400 2.600M412.300 287.300l1.400 2.600M416.800 290l1.200 2.800M504.700 295l-1.400-2.600M509.700 292.500l-1.200-2.800M514.500 289.500l-1-3" stroke="#f3a068" stroke-width="2.400" stroke-linecap="round"/>
<circle cx="640.500" cy="186.500" r="2.500" fill="#fff" stroke="#222" stroke-width="1"/>
<text transform="translate(263 128.500) scale(.52 1)" font-family="Liberation Sans,sans-serif" font-size="41" fill="#000" stroke="#000" stroke-width="1.600">C</text>
<text x="281 295 308 316.500 334" y="129.500 129.500 131.500 131.500 131.500" font-family="Liberation Sans,sans-serif" font-size="24" fill="#000" stroke="#000" stroke-width=".9">ố lên</text>
<text x="263" y="488.500" font-family="Liberation Sans,sans-serif" font-size="15" font-weight="bold" fill="#000" textLength="78" lengthAdjust="spacingAndGlyphs">Hoidap247</text>
<text x="258" y="514" font-family="Liberation Sans,sans-serif" font-size="25" font-weight="bold" fill="#000" textLength="94" lengthAdjust="spacingAndGlyphs">Tuli2612</text>
</svg>
<!--RIGHT-->
<div class="teal" style="left:779px;top:58px;width:245px"></div><div class="ph" style="left:779px;top:60px;width:245px"><span style="position:relative;left:-10px">Màu</span><div class="pb" style="left:223px"><svg class="a" style="left:0;top:0" width="7" height="7"><path d="M1.500 2.500v4h4v-2M3.500 3.500l3-3M4.500 .5h2v2" fill="none" stroke="#888" stroke-width=".8"/></svg></div><div class="pb" style="left:235px"><svg class="a" style="left:.5px;top:.5px" width="7" height="7"><path d="M1.500 1.500l4 4M5.500 1.500l-4 4" stroke="#777" stroke-width="1.400"/></svg></div></div>
<div class="a" style="left:779px;top:74px;width:245px;height:120px;background:#d6dcdf"></div>
<div class="a" style="left:792px;top:87px;width:16px;height:16px;background:#fff;border:1px solid #999"></div>
<div class="a" style="left:784px;top:80px;width:17px;height:17px;background:#000;border:2px solid #c8161c"></div>
<div class="a chk" style="left:787px;top:108px;width:18px;height:18px;border:1px solid #b5babd;background-size:8px 8px;background-position:0 0,4px 4px"></div>
<span class="t" style="left:785px;top:132.0px;font-size:7.500px;color:#333">R:0</span>
<span class="t" style="left:785px;top:140.3px;font-size:7.500px;color:#333">G:0</span>
<span class="t" style="left:785px;top:148.6px;font-size:7.500px;color:#333">B:0</span>
<span class="t" style="left:785px;top:158px;font-size:7.500px;color:#333">#000000</span>
<div class="sb" style="left:787px;top:178px;width:19px;height:13px"><svg class="a" style="left:-1px;top:-1px" width="19" height="13"><circle cx="9.500" cy="6.500" r="3.500" fill="#777"/><circle cx="8" cy="5.500" r=".8" fill="#ddd"/><circle cx="10.500" cy="5" r=".8" fill="#ddd"/><circle cx="11" cy="7.500" r=".8" fill="#ddd"/></svg></div>
<div class="sb" style="left:810px;top:178px;width:19px;height:13px"><div class="a" style="left:7px;top:8px;width:4px;height:1px;background:#888"></div></div>
<div class="a" style="left:836px;top:76px;width:170px;height:117px;background:linear-gradient(to bottom,rgba(0,0,0,0),#000),linear-gradient(to right,#fff,#00e58c)"></div>
<div class="a" style="left:1009px;top:76px;width:15px;height:117px;background:linear-gradient(to bottom,#ff0000 0%,#ff00ff 17%,#0000ff 33%,#00ffff 50%,#00ff00 67%,#ffff00 83%,#ff0000 100%)"></div>
<div class="a" style="left:1012px;top:137px;width:8px;height:8px;border-radius:50%;border:1.500px solid #fff;box-shadow:0 0 0 .5px #555"></div>
<div class="a" style="left:832px;top:188px;width:8px;height:8px;border-radius:50%;border:1.500px solid #fff;box-shadow:0 0 0 .5px #333"></div>
<div class="dk" style="left:779px;top:195px;width:245px"></div><div class="teal" style="left:779px;top:197px;width:245px"></div><div class="ph" style="left:779px;top:199px;width:245px"><span style="position:relative;left:-10px">Hoa tiêu</span><div class="pb" style="left:223px"><svg class="a" style="left:0;top:0" width="7" height="7"><path d="M1.500 2.500v4h4v-2M3.500 3.500l3-3M4.500 .5h2v2" fill="none" stroke="#888" stroke-width=".8"/></svg></div><div class="pb" style="left:235px"><svg class="a" style="left:.5px;top:.5px" width="7" height="7"><path d="M1.500 1.500l4 4M5.500 1.500l-4 4" stroke="#777" stroke-width="1.400"/></svg></div></div>
<div class="a" style="left:779px;top:213px;width:245px;height:26px;background:#d6dcdf"></div>
<div class="sb" style="left:782px;top:217px"><svg class="a" style="left:-1px;top:-1px" width="19" height="19"><circle cx="8" cy="8" r="4.500" fill="#f4f4f4" stroke="#555" stroke-width="1.200"/><path d="M11.500 11.500l3.500 3.500" stroke="#555" stroke-width="2"/><text x="8" y="10.500" font-size="6" text-anchor="middle" fill="#444" font-family="Liberation Sans,sans-serif">1</text></svg></div>
<div class="sb" style="left:810px;top:217px"><svg class="a" style="left:-1px;top:-1px" width="19" height="19"><circle cx="8" cy="8" r="4.500" fill="#f4f4f4" stroke="#555" stroke-width="1.200"/><path d="M11.500 11.500l3.500 3.500" stroke="#555" stroke-width="2"/><path d="M5.500 8h5M8 5.500v5" stroke="#444" stroke-width="1.200"/></svg></div>
<div class="sb" style="left:833px;top:217px"><svg class="a" style="left:-1px;top:-1px" width="19" height="19"><rect x="3.500" y="4.500" width="12" height="10" fill="#eceeef" stroke="#777"/><path d="M5 9v-3h3.500zM14 9v-3h-3.500zM5 10v3h3.500zM14 10v3h-3.500z" fill="#777"/></svg></div>
<div class="sb" style="left:857px;top:217px"><svg class="a" style="left:-1px;top:-1px" width="19" height="19"><circle cx="8" cy="8" r="4.500" fill="#f4f4f4" stroke="#555" stroke-width="1.200"/><path d="M11.500 11.500l3.500 3.500" stroke="#555" stroke-width="2"/><path d="M5.500 8h5" stroke="#444" stroke-width="1.200"/></svg></div>
<div class="sb" style="left:885px;top:217px"><svg class="a" style="left:-1px;top:-1px" width="19" height="19"><path d="M4 9.500a5.500 5.500 0 1 0 2-4.200" fill="none" stroke="#555" stroke-width="1.300"/><path d="M4 3v4h4z" fill="#555"/><rect x="6.500" y="7" width="6" height="5" fill="#666" transform="rotate(-15 9.500 9.500)"/></svg></div>
<div class="sb" style="left:908px;top:217px"><svg class="a" style="left:-1px;top:-1px" width="19" height="19"><rect x="5.500" y="5.500" width="8" height="8" fill="#999"/><path d="M3.500 6v-2.500h2.500M13 3.500h2.500v2.500M15.500 13v2.500h-2.500M6 15.500h-2.500v-2.500" fill="none" stroke="#aaa" stroke-width="1"/></svg></div>
<div class="sb" style="left:932px;top:217px"><svg class="a" style="left:-1px;top:-1px" width="19" height="19"><path d="M15 9.500a5.500 5.500 0 1 1-2-4.200" fill="none" stroke="#555" stroke-width="1.300"/><path d="M15 3v4h-4z" fill="#555"/><rect x="6.500" y="7" width="6" height="5" fill="#666" transform="rotate(15 9.500 9.500)"/></svg></div>
<div class="sb" style="left:960px;top:217px"><svg class="a" style="left:-1px;top:-1px" width="19" height="19"><rect x="4.500" y="7.500" width="4" height="8" fill="#666" stroke="#555"/><rect x="11.500" y="7.500" width="4" height="8" fill="#f4f4f4" stroke="#555"/><path d="M6 5.500c1.500-2.500 6-2.500 7.500 0" fill="none" stroke="#555" stroke-width="1.200"/><path d="M14.500 3l-.5 3.500l-3-1z" fill="#555"/></svg></div>
<div class="sep" style="left:805px;top:221px;height:11px;background:#a4aaae"></div>
<div class="sep" style="left:880px;top:221px;height:11px;background:#a4aaae"></div>
<div class="sep" style="left:955px;top:221px;height:11px;background:#a4aaae"></div>
<div class="a" style="left:779px;top:239px;width:245px;height:56px;background:#6b6e73"></div>
<div class="a" style="left:875px;top:240px;width:54px;height:53px;background:#fff"></div>
<svg class="a" style="left:875px;top:240px" width="54" height="53" viewBox="252 78 436 436" preserveAspectRatio="none"><defs><clipPath id="bc2"><path d="M395.4 361C392.8 361.2 386.9 364.2 380.0 362.0C373.1 359.8 361.0 353.5 354.0 348.0C347.0 342.5 341.5 336.3 338.0 329.0C334.5 321.7 334.0 312.6 333.0 304.4C332.0 296.2 331.7 287.4 332.0 280.0C332.3 272.6 333.2 266.3 335.0 260.0C336.8 253.7 340.2 248.2 343.0 242.0C345.8 235.8 348.2 230.0 352.0 223.0C355.8 216.0 360.3 207.4 366.0 200.0C371.7 192.6 379.6 184.8 386.3 178.8C393.0 172.8 399.0 167.5 406.4 164.2C413.8 160.9 421.4 160.5 430.5 159.2C439.6 157.9 452.4 156.9 460.7 156.4C468.9 155.9 471.8 155.6 480.0 156.2C488.2 156.8 499.9 157.6 510.0 160.0C520.1 162.4 531.3 166.1 540.4 170.8C549.5 175.6 557.8 182.6 564.5 188.5C571.2 194.4 575.7 200.1 580.6 206.4C585.5 212.7 590.4 220.2 593.7 226.5C597.0 232.8 598.6 236.8 600.5 244.0C602.4 251.2 604.0 260.6 605.0 270.0C606.0 279.4 606.9 291.7 606.5 300.4C606.1 309.1 605.2 315.4 602.5 322.0C599.8 328.6 595.0 335.0 590.0 340.0C585.0 345.0 579.5 348.2 572.6 352.0C565.7 355.8 554.9 360.7 548.4 363.0C541.9 365.3 535.9 365.5 533.4 366.0C533.7 368.2 532.8 374.6 535.0 379.0C537.2 383.4 544.5 390.1 546.4 392.3C543.0 395.2 534.7 404.6 526.0 410.0C517.3 415.4 504.0 421.2 494.0 424.5C484.0 427.8 475.0 429.0 466.0 429.5C457.0 430.0 449.2 429.4 440.0 427.5C430.8 425.6 418.5 422.1 410.5 418.4C402.5 414.6 396.1 409.1 392.0 405.0C387.9 400.9 386.7 398.2 386.0 394.0C385.3 389.8 386.4 385.5 388.0 380.0C389.6 374.5 394.2 364.2 395.4 361.0Z"/></clipPath></defs><path d="M395.4 361C392.8 361.2 386.9 364.2 380.0 362.0C373.1 359.8 361.0 353.5 354.0 348.0C347.0 342.5 341.5 336.3 338.0 329.0C334.5 321.7 334.0 312.6 333.0 304.4C332.0 296.2 331.7 287.4 332.0 280.0C332.3 272.6 333.2 266.3 335.0 260.0C336.8 253.7 340.2 248.2 343.0 242.0C345.8 235.8 348.2 230.0 352.0 223.0C355.8 216.0 360.3 207.4 366.0 200.0C371.7 192.6 379.6 184.8 386.3 178.8C393.0 172.8 399.0 167.5 406.4 164.2C413.8 160.9 421.4 160.5 430.5 159.2C439.6 157.9 452.4 156.9 460.7 156.4C468.9 155.9 471.8 155.6 480.0 156.2C488.2 156.8 499.9 157.6 510.0 160.0C520.1 162.4 531.3 166.1 540.4 170.8C549.5 175.6 557.8 182.6 564.5 188.5C571.2 194.4 575.7 200.1 580.6 206.4C585.5 212.7 590.4 220.2 593.7 226.5C597.0 232.8 598.6 236.8 600.5 244.0C602.4 251.2 604.0 260.6 605.0 270.0C606.0 279.4 606.9 291.7 606.5 300.4C606.1 309.1 605.2 315.4 602.5 322.0C599.8 328.6 595.0 335.0 590.0 340.0C585.0 345.0 579.5 348.2 572.6 352.0C565.7 355.8 554.9 360.7 548.4 363.0C541.9 365.3 535.9 365.5 533.4 366.0C533.7 368.2 532.8 374.6 535.0 379.0C537.2 383.4 544.5 390.1 546.4 392.3C543.0 395.2 534.7 404.6 526.0 410.0C517.3 415.4 504.0 421.2 494.0 424.5C484.0 427.8 475.0 429.0 466.0 429.5C457.0 430.0 449.2 429.4 440.0 427.5C430.8 425.6 418.5 422.1 410.5 418.4C402.5 414.6 396.1 409.1 392.0 405.0C387.9 400.9 386.7 398.2 386.0 394.0C385.3 389.8 386.4 385.5 388.0 380.0C389.6 374.5 394.2 364.2 395.4 361.0Z" fill="#fbd3f7"/><g clip-path="url(#bc2)"><path d="M472 150C472.0 151.8 467.3 157.0 472.0 161.0C476.7 165.0 492.0 169.2 500.0 174.0C508.0 178.8 514.0 184.0 520.0 190.0C526.0 196.0 531.6 203.6 536.0 210.0C540.4 216.4 543.4 222.5 546.4 228.5C549.4 234.5 552.1 239.1 554.0 246.0C555.9 252.9 557.7 261.0 558.0 270.0C558.3 279.0 558.3 288.0 556.0 300.0C553.7 312.0 550.0 328.7 544.0 342.0C538.0 355.3 528.3 367.3 520.0 380.0C511.7 392.7 500.7 408.0 494.0 418.0C487.3 428.0 486.5 436.3 480.0 440.0C473.5 443.7 461.6 443.7 455.0 440.0C448.4 436.3 448.1 428.0 440.6 418.0C433.1 408.0 419.4 392.2 410.0 380.0C400.6 367.8 392.3 356.7 384.0 345.0C375.7 333.3 365.3 319.8 360.0 310.0C354.7 300.2 353.8 292.7 352.0 286.0C350.2 279.3 349.8 276.3 349.0 270.0C348.2 263.7 348.5 253.8 347.0 248.0C345.5 242.2 341.2 237.2 340.0 235.0L300 235L300 140Z" fill="#fff"/><ellipse cx="401.500" cy="302.500" rx="45.500" ry="44" fill="#fcc19c"/><ellipse cx="525" cy="303" rx="45" ry="45" fill="#fcc19c"/></g><path d="M395.4 361C392.8 361.2 386.9 364.2 380.0 362.0C373.1 359.8 361.0 353.5 354.0 348.0C347.0 342.5 341.5 336.3 338.0 329.0C334.5 321.7 334.0 312.6 333.0 304.4C332.0 296.2 331.7 287.4 332.0 280.0C332.3 272.6 333.2 266.3 335.0 260.0C336.8 253.7 340.2 248.2 343.0 242.0C345.8 235.8 348.2 230.0 352.0 223.0C355.8 216.0 360.3 207.4 366.0 200.0C371.7 192.6 379.6 184.8 386.3 178.8C393.0 172.8 399.0 167.5 406.4 164.2C413.8 160.9 421.4 160.5 430.5 159.2C439.6 157.9 452.4 156.9 460.7 156.4C468.9 155.9 471.8 155.6 480.0 156.2C488.2 156.8 499.9 157.6 510.0 160.0C520.1 162.4 531.3 166.1 540.4 170.8C549.5 175.6 557.8 182.6 564.5 188.5C571.2 194.4 575.7 200.1 580.6 206.4C585.5 212.7 590.4 220.2 593.7 226.5C597.0 232.8 598.6 236.8 600.5 244.0C602.4 251.2 604.0 260.6 605.0 270.0C606.0 279.4 606.9 291.7 606.5 300.4C606.1 309.1 605.2 315.4 602.5 322.0C599.8 328.6 595.0 335.0 590.0 340.0C585.0 345.0 579.5 348.2 572.6 352.0C565.7 355.8 554.9 360.7 548.4 363.0C541.9 365.3 535.9 365.5 533.4 366.0C533.7 368.2 532.8 374.6 535.0 379.0C537.2 383.4 544.5 390.1 546.4 392.3C543.0 395.2 534.7 404.6 526.0 410.0C517.3 415.4 504.0 421.2 494.0 424.5C484.0 427.8 475.0 429.0 466.0 429.5C457.0 430.0 449.2 429.4 440.0 427.5C430.8 425.6 418.5 422.1 410.5 418.4C402.5 414.6 396.1 409.1 392.0 405.0C387.9 400.9 386.7 398.2 386.0 394.0C385.3 389.8 386.4 385.5 388.0 380.0C389.6 374.5 394.2 364.2 395.4 361.0Z" fill="none" stroke="#111" stroke-width="9"/><path d="M464 156v-5.500c-7.500-1-13.500-6-13.500-12.500c0-5 4-9 9.500-9c4.500 0 7.500 2.500 9.500 6c2-3.500 5.500-6 10-6c5.500 0 9 4 9 9c0 6.500-6 11.500-14.500 12.500v5.500c0 6-10 6-10 0z" fill="#336b57"/><circle cx="465.500" cy="276" r="10" fill="#f8d2f5"/><circle cx="433" cy="267" r="20.500" fill="#000"/><circle cx="497" cy="269" r="20.500" fill="#000"/><text x="264" y="128" font-family="Liberation Sans,sans-serif" font-size="30" font-weight="bold" fill="#222">Cố lên</text><text x="262" y="506" font-family="Liberation Sans,sans-serif" font-size="22" font-weight="bold" fill="#222">Tuli2612</text></svg>
<div class="a" style="left:866px;top:239px;width:73px;height:55px;border:2px solid #d0252b"></div>
<div class="dk" style="left:779px;top:295px;width:245px"></div><div class="teal" style="left:779px;top:297px;width:245px"></div><div class="ph" style="left:779px;top:299px;width:245px"><span style="position:relative;left:-10px">Lớp</span><div class="pb" style="left:223px"><svg class="a" style="left:0;top:0" width="7" height="7"><path d="M1.500 2.500v4h4v-2M3.500 3.500l3-3M4.500 .5h2v2" fill="none" stroke="#888" stroke-width=".8"/></svg></div><div class="pb" style="left:235px"><svg class="a" style="left:.5px;top:.5px" width="7" height="7"><path d="M1.500 1.500l4 4M5.500 1.500l-4 4" stroke="#777" stroke-width="1.400"/></svg></div></div>
<div class="a" style="left:779px;top:313px;width:245px;height:218px;background:#d6dcdf"></div>
<span class="t" style="left:783px;top:320px;font-size:8.500px;color:#333">Độ trong</span>
<div class="a" style="left:845px;top:318px;width:143px;height:12px;background:linear-gradient(90deg,#d3ebf8,#1b9be6);border:1px solid #6f8fa5"></div>
<span class="t" style="left:993px;top:320px;font-size:8.500px;color:#333">100 %</span>
<span class="t" style="left:783px;top:340px;font-size:8.500px;color:#333">Pha trộn</span>
<div class="a" style="left:847px;top:335px;width:173px;height:16px;background:#fff;border:1px solid #aab0b4;border-radius:2px"><span class="t" style="left:2px;top:4px;font-size:8px;color:#333">Bình thường</span><svg class="a" style="left:163px;top:6px" width="6" height="4"><path d="M.5 0h4l-2 2.500z" fill="#b5b9bc"/></svg></div>
<div class="cb" style="left:786px;top:359px;width:10px;height:10px;border-color:#555;background:#f2f3f4"></div><span class="t" style="left:799px;top:360px;font-size:8.200px;color:#333">Bảo vệ alpha</span>
<div class="cb" style="left:867px;top:359px;width:10px;height:10px;border-color:#555;background:#f2f3f4"></div><span class="t" style="left:880px;top:360px;font-size:8.500px;color:#333">Xén bớt</span>
<div class="cb" style="left:947px;top:359px;width:10px;height:10px;border-color:#555;background:#f2f3f4"></div><span class="t" style="left:960px;top:360px;font-size:8.500px;color:#333">Khóa</span>
<div class="a" style="left:780px;top:374px;width:229px;height:61px;background:#fff;border:1px solid #444"></div>
<div class="a" style="left:795px;top:375px;width:213px;height:29px;background:#7ccbf6"></div>
<div class="a" style="left:781px;top:404px;width:227px;height:1px;background:#444"></div>
<div class="a" style="left:794px;top:375px;width:1px;height:59px;background:#555"></div>
<div class="a" style="left:785px;top:386px;width:6px;height:6px;border-radius:50%;background:#c9c9c9;border:1px solid #aaa"></div>
<div class="a" style="left:785px;top:416px;width:6px;height:6px;border-radius:50%;background:#c9c9c9;border:1px solid #aaa"></div>
<div class="a chk" style="left:806px;top:376px;width:27px;height:27px;border:1px solid #bbb;background-size:4px 4px;background-position:0 0,2px 2px"></div>
<div class="a chk" style="left:806px;top:406px;width:27px;height:27px;border:1px solid #bbb;background-size:4px 4px;background-position:0 0,2px 2px"></div>
<svg class="a" style="left:807px;top:407px" width="25" height="25" viewBox="252 78 436 436" preserveAspectRatio="none"><defs><clipPath id="bc3"><path d="M395.4 361C392.8 361.2 386.9 364.2 380.0 362.0C373.1 359.8 361.0 353.5 354.0 348.0C347.0 342.5 341.5 336.3 338.0 329.0C334.5 321.7 334.0 312.6 333.0 304.4C332.0 296.2 331.7 287.4 332.0 280.0C332.3 272.6 333.2 266.3 335.0 260.0C336.8 253.7 340.2 248.2 343.0 242.0C345.8 235.8 348.2 230.0 352.0 223.0C355.8 216.0 360.3 207.4 366.0 200.0C371.7 192.6 379.6 184.8 386.3 178.8C393.0 172.8 399.0 167.5 406.4 164.2C413.8 160.9 421.4 160.5 430.5 159.2C439.6 157.9 452.4 156.9 460.7 156.4C468.9 155.9 471.8 155.6 480.0 156.2C488.2 156.8 499.9 157.6 510.0 160.0C520.1 162.4 531.3 166.1 540.4 170.8C549.5 175.6 557.8 182.6 564.5 188.5C571.2 194.4 575.7 200.1 580.6 206.4C585.5 212.7 590.4 220.2 593.7 226.5C597.0 232.8 598.6 236.8 600.5 244.0C602.4 251.2 604.0 260.6 605.0 270.0C606.0 279.4 606.9 291.7 606.5 300.4C606.1 309.1 605.2 315.4 602.5 322.0C599.8 328.6 595.0 335.0 590.0 340.0C585.0 345.0 579.5 348.2 572.6 352.0C565.7 355.8 554.9 360.7 548.4 363.0C541.9 365.3 535.9 365.5 533.4 366.0C533.7 368.2 532.8 374.6 535.0 379.0C537.2 383.4 544.5 390.1 546.4 392.3C543.0 395.2 534.7 404.6 526.0 410.0C517.3 415.4 504.0 421.2 494.0 424.5C484.0 427.8 475.0 429.0 466.0 429.5C457.0 430.0 449.2 429.4 440.0 427.5C430.8 425.6 418.5 422.1 410.5 418.4C402.5 414.6 396.1 409.1 392.0 405.0C387.9 400.9 386.7 398.2 386.0 394.0C385.3 389.8 386.4 385.5 388.0 380.0C389.6 374.5 394.2 364.2 395.4 361.0Z"/></clipPath></defs><path d="M395.4 361C392.8 361.2 386.9 364.2 380.0 362.0C373.1 359.8 361.0 353.5 354.0 348.0C347.0 342.5 341.5 336.3 338.0 329.0C334.5 321.7 334.0 312.6 333.0 304.4C332.0 296.2 331.7 287.4 332.0 280.0C332.3 272.6 333.2 266.3 335.0 260.0C336.8 253.7 340.2 248.2 343.0 242.0C345.8 235.8 348.2 230.0 352.0 223.0C355.8 216.0 360.3 207.4 366.0 200.0C371.7 192.6 379.6 184.8 386.3 178.8C393.0 172.8 399.0 167.5 406.4 164.2C413.8 160.9 421.4 160.5 430.5 159.2C439.6 157.9 452.4 156.9 460.7 156.4C468.9 155.9 471.8 155.6 480.0 156.2C488.2 156.8 499.9 157.6 510.0 160.0C520.1 162.4 531.3 166.1 540.4 170.8C549.5 175.6 557.8 182.6 564.5 188.5C571.2 194.4 575.7 200.1 580.6 206.4C585.5 212.7 590.4 220.2 593.7 226.5C597.0 232.8 598.6 236.8 600.5 244.0C602.4 251.2 604.0 260.6 605.0 270.0C606.0 279.4 606.9 291.7 606.5 300.4C606.1 309.1 605.2 315.4 602.5 322.0C599.8 328.6 595.0 335.0 590.0 340.0C585.0 345.0 579.5 348.2 572.6 352.0C565.7 355.8 554.9 360.7 548.4 363.0C541.9 365.3 535.9 365.5 533.4 366.0C533.7 368.2 532.8 374.6 535.0 379.0C537.2 383.4 544.5 390.1 546.4 392.3C543.0 395.2 534.7 404.6 526.0 410.0C517.3 415.4 504.0 421.2 494.0 424.5C484.0 427.8 475.0 429.0 466.0 429.5C457.0 430.0 449.2 429.4 440.0 427.5C430.8 425.6 418.5 422.1 410.5 418.4C402.5 414.6 396.1 409.1 392.0 405.0C387.9 400.9 386.7 398.2 386.0 394.0C385.3 389.8 386.4 385.5 388.0 380.0C389.6 374.5 394.2 364.2 395.4 361.0Z" fill="#fbd3f7"/><g clip-path="url(#bc3)"><path d="M472 150C472.0 151.8 467.3 157.0 472.0 161.0C476.7 165.0 492.0 169.2 500.0 174.0C508.0 178.8 514.0 184.0 520.0 190.0C526.0 196.0 531.6 203.6 536.0 210.0C540.4 216.4 543.4 222.5 546.4 228.5C549.4 234.5 552.1 239.1 554.0 246.0C555.9 252.9 557.7 261.0 558.0 270.0C558.3 279.0 558.3 288.0 556.0 300.0C553.7 312.0 550.0 328.7 544.0 342.0C538.0 355.3 528.3 367.3 520.0 380.0C511.7 392.7 500.7 408.0 494.0 418.0C487.3 428.0 486.5 436.3 480.0 440.0C473.5 443.7 461.6 443.7 455.0 440.0C448.4 436.3 448.1 428.0 440.6 418.0C433.1 408.0 419.4 392.2 410.0 380.0C400.6 367.8 392.3 356.7 384.0 345.0C375.7 333.3 365.3 319.8 360.0 310.0C354.7 300.2 353.8 292.7 352.0 286.0C350.2 279.3 349.8 276.3 349.0 270.0C348.2 263.7 348.5 253.8 347.0 248.0C345.5 242.2 341.2 237.2 340.0 235.0L300 235L300 140Z" fill="#fff"/><ellipse cx="401.500" cy="302.500" rx="45.500" ry="44" fill="#fcc19c"/><ellipse cx="525" cy="303" rx="45" ry="45" fill="#fcc19c"/></g><path d="M395.4 361C392.8 361.2 386.9 364.2 380.0 362.0C373.1 359.8 361.0 353.5 354.0 348.0C347.0 342.5 341.5 336.3 338.0 329.0C334.5 321.7 334.0 312.6 333.0 304.4C332.0 296.2 331.7 287.4 332.0 280.0C332.3 272.6 333.2 266.3 335.0 260.0C336.8 253.7 340.2 248.2 343.0 242.0C345.8 235.8 348.2 230.0 352.0 223.0C355.8 216.0 360.3 207.4 366.0 200.0C371.7 192.6 379.6 184.8 386.3 178.8C393.0 172.8 399.0 167.5 406.4 164.2C413.8 160.9 421.4 160.5 430.5 159.2C439.6 157.9 452.4 156.9 460.7 156.4C468.9 155.9 471.8 155.6 480.0 156.2C488.2 156.8 499.9 157.6 510.0 160.0C520.1 162.4 531.3 166.1 540.4 170.8C549.5 175.6 557.8 182.6 564.5 188.5C571.2 194.4 575.7 200.1 580.6 206.4C585.5 212.7 590.4 220.2 593.7 226.5C597.0 232.8 598.6 236.8 600.5 244.0C602.4 251.2 604.0 260.6 605.0 270.0C606.0 279.4 606.9 291.7 606.5 300.4C606.1 309.1 605.2 315.4 602.5 322.0C599.8 328.6 595.0 335.0 590.0 340.0C585.0 345.0 579.5 348.2 572.6 352.0C565.7 355.8 554.9 360.7 548.4 363.0C541.9 365.3 535.9 365.5 533.4 366.0C533.7 368.2 532.8 374.6 535.0 379.0C537.2 383.4 544.5 390.1 546.4 392.3C543.0 395.2 534.7 404.6 526.0 410.0C517.3 415.4 504.0 421.2 494.0 424.5C484.0 427.8 475.0 429.0 466.0 429.5C457.0 430.0 449.2 429.4 440.0 427.5C430.8 425.6 418.5 422.1 410.5 418.4C402.5 414.6 396.1 409.1 392.0 405.0C387.9 400.9 386.7 398.2 386.0 394.0C385.3 389.8 386.4 385.5 388.0 380.0C389.6 374.5 394.2 364.2 395.4 361.0Z" fill="none" stroke="#111" stroke-width="9"/><path d="M464 156v-5.500c-7.500-1-13.500-6-13.500-12.500c0-5 4-9 9.500-9c4.500 0 7.500 2.500 9.500 6c2-3.500 5.500-6 10-6c5.500 0 9 4 9 9c0 6.500-6 11.500-14.500 12.500v5.500c0 6-10 6-10 0z" fill="#336b57"/><circle cx="465.500" cy="276" r="10" fill="#f8d2f5"/><circle cx="433" cy="267" r="20.500" fill="#000"/><circle cx="497" cy="269" r="20.500" fill="#000"/></svg>
<span class="t" style="left:845px;top:385px;font-size:9.500px;font-weight:bold;color:#111">Lớp2</span>
<span class="t" style="left:845px;top:415px;font-size:9.500px;color:#222">Lớp1</span>
<svg class="a" style="left:991px;top:382px" width="16" height="16"><circle cx="8" cy="8" r="5.200" fill="none" stroke="#fff" stroke-width="3.600" stroke-dasharray="2.300 1.780"/><circle cx="8" cy="8" r="4.500" fill="#fff"/><circle cx="8" cy="8" r="1.800" fill="#7ccbf6"/></svg>
<div class="a" style="left:780px;top:435px;width:229px;height:70px;background:#808080"></div>
<div class="a" style="left:1010px;top:374px;width:14px;height:131px;background:#dfe3e5"></div>
<div class="a" style="left:1011px;top:380px;width:13px;height:116px;background:#c3c8cb;border:1px solid #a9afb3;border-radius:4px 0 0 4px"></div>
<div class="sb" style="left:783px;top:509px;width:19px"><svg class="a" style="left:-1px;top:-1px" width="19" height="19"><path d="M5.500 3.500h6l3 3v9h-9z" fill="#f7f7f7" stroke="#666"/></svg></div>
<div class="sb" style="left:806px;top:509px;width:19px"><svg class="a" style="left:-1px;top:-1px" width="19" height="19"><path d="M5.500 3.500h6l3 3v9h-9z" fill="#f7f7f7" stroke="#666"/><text x="10" y="13.500" font-size="6.500" text-anchor="middle" fill="#555" font-family="Liberation Sans,sans-serif">8</text></svg></div>
<div class="sb" style="left:830px;top:509px;width:19px"><svg class="a" style="left:-1px;top:-1px" width="19" height="19"><path d="M5.500 3.500h6l3 3v9h-9z" fill="#f7f7f7" stroke="#666"/><text x="10" y="13.500" font-size="6.500" text-anchor="middle" fill="#555" font-family="Liberation Sans,sans-serif">1</text></svg></div>
<div class="sb" style="left:853px;top:509px;width:24px;background:linear-gradient(#f4f5f6,#e4e7e8);border-color:#d0d4d6"><svg class="a" style="left:-1px;top:-1px" width="24" height="19"><path d="M15 9h4l-2 2.500z" fill="#333"/></svg></div>
<div class="sb" style="left:880px;top:509px;width:19px"><svg class="a" style="left:-1px;top:-1px" width="19" height="19"><path d="M3.500 5h5l1.500 2h6v8.500h-12.500z" fill="#555"/></svg></div>
<div class="sb" style="left:908px;top:509px;width:19px"><svg class="a" style="left:-1px;top:-1px" width="19" height="19"><rect x="7.500" y="4.500" width="8" height="8" fill="#f4f4f4" stroke="#666"/><rect x="4.500" y="7.500" width="8" height="8" fill="#f4f4f4" stroke="#666"/></svg></div>
<div class="sb" style="left:932px;top:509px;width:19px"><svg class="a" style="left:-1px;top:-1px" width="19" height="19"><rect x="4" y="4" width="4" height="4" fill="#555"/><rect x="4" y="11" width="4" height="4" fill="#555"/><rect x="11" y="7" width="5" height="5" fill="#555"/><path d="M8 6h2v7h-2M10 9.500h1" stroke="#555" fill="none"/></svg></div>
<div class="sb" style="left:960px;top:509px;width:19px"><svg class="a" style="left:-1px;top:-1px" width="19" height="19"><path d="M5 6.500h10M8 6v-2h4v2M6 7l.8 9h6.400l.8-9" fill="none" stroke="#333" stroke-width="1.300"/><path d="M8.500 8.500v6M11.500 8.500v6" stroke="#333" stroke-width="1.200"/></svg></div>
<div class="sep" style="left:903px;top:513px;height:11px;background:#a4aaae"></div>
<div class="sep" style="left:955px;top:513px;height:11px;background:#a4aaae"></div>
<!--STATUS-->
<div class="a" style="left:0;top:531px;width:1024px;height:16px;background:#d5dbde"></div>
<span class="t st" style="left:5px">1024 * 1024 pixel</span><span class="t st" style="left:77.5px">(7.4 * 7.4cm)</span><span class="t st" style="left:132.5px">350 dpi</span><span class="t st" style="left:168.5px">56 %</span><span class="t st" style="left:193.5px">( 913, 256 )</span><span class="t st" style="left:242px;top:535.500px;font-size:8.900px">Vẽ một đường thẳng bằng cách giữ phím Shift, Thay đổi cỡ cọ bằng cách giữ phím Ctrl, Alt và kéo</span>
</body></html>
